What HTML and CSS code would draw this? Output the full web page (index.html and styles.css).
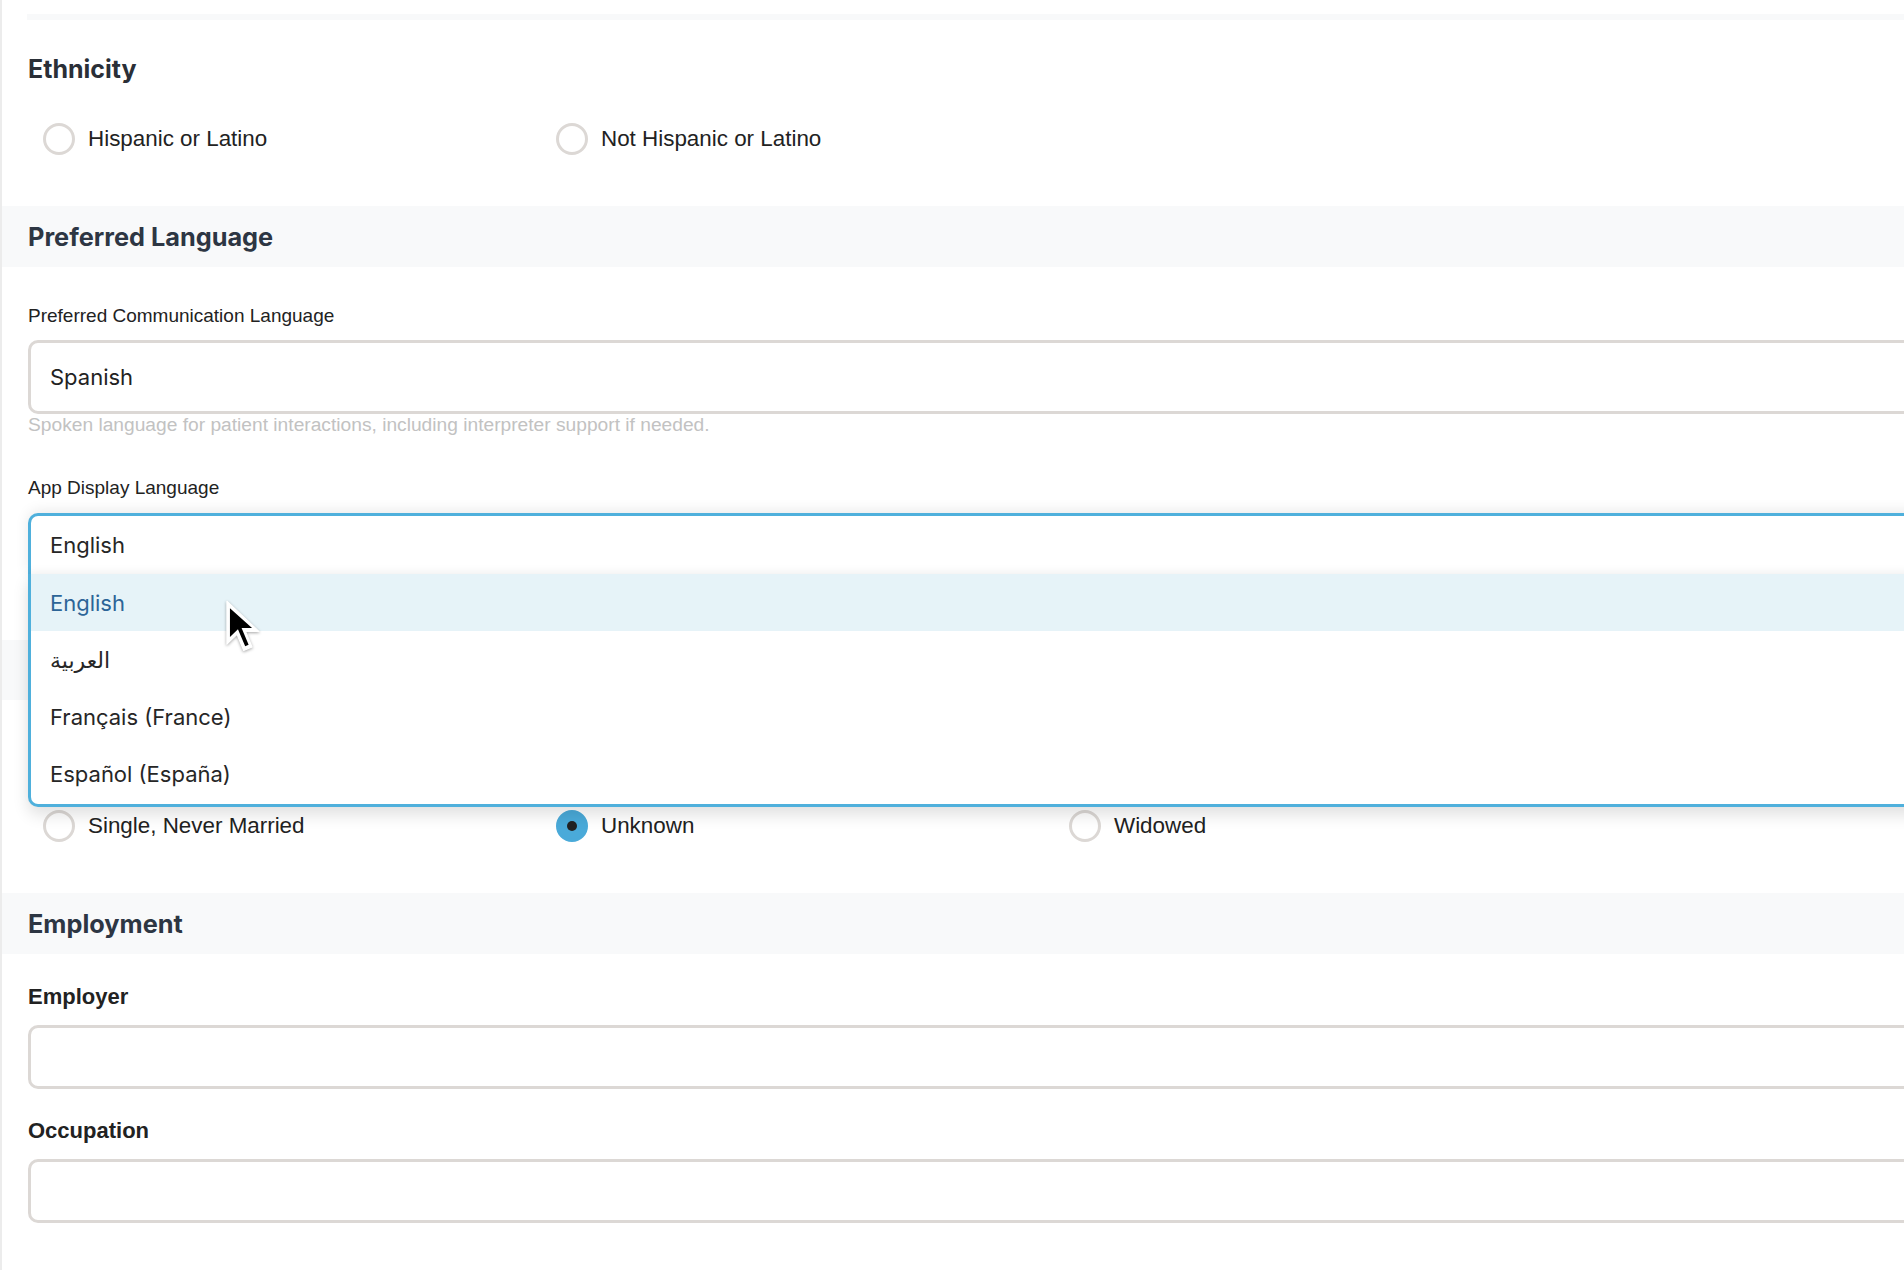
FILE: index.html
```html
<!DOCTYPE html>
<html lang="en">
<head>
<meta charset="utf-8">
<title>Patient Demographics</title>
<link rel="stylesheet" href="styles.css">
</head>
<body>
<div class="page">
  <div class="top-rule"></div>

  <section class="group">
    <h3 class="group-title">Ethnicity</h3>
    <div class="radios radios-ethnicity">
      <label class="radio"><span class="dot"></span><span class="radio-text">Hispanic or Latino</span></label>
      <label class="radio"><span class="dot"></span><span class="radio-text">Not Hispanic or Latino</span></label>
    </div>
  </section>

  <h2 class="band band-lang">Preferred Language</h2>

  <div class="field field-comm">
    <div class="label">Preferred Communication Language</div>
    <div class="input input-tall">Spanish</div>
    <div class="help">Spoken language for patient interactions, including interpreter support if needed.</div>
  </div>

  <div class="field field-app">
    <div class="label">App Display Language</div>
    <div class="select">
      <div class="select-control">English</div>
      <ul class="menu-list">
        <li class="opt opt-active">English</li>
        <li class="opt"><span dir="rtl">العربية</span></li>
        <li class="opt">Français (France)</li>
        <li class="opt">Español (España)</li>
      </ul>
    </div>
  </div>

  <div class="band band-marital" aria-label="Marital Status"></div>
  <div class="radios radios-marital">
    <label class="radio"><span class="dot"></span><span class="radio-text">Single, Never Married</span></label>
    <label class="radio"><span class="dot dot-on"></span><span class="radio-text">Unknown</span></label>
    <label class="radio"><span class="dot"></span><span class="radio-text">Widowed</span></label>
  </div>

  <h2 class="band band-emp">Employment</h2>

  <div class="field field-employer">
    <div class="label-bold">Employer</div>
    <div class="input input-short"></div>
  </div>
  <div class="field field-occupation">
    <div class="label-bold">Occupation</div>
    <div class="input input-short"></div>
  </div>

  <svg class="cursor" width="40" height="56" viewBox="0 0 21 29" aria-hidden="true">
    <path d="M1 1 L1 23.5 L6.3 18.3 L9.8 26.8 L14.2 25 L10.8 16.8 L17.8 16.8 Z" fill="#ffffff" stroke="#ffffff" stroke-width="0.6" stroke-linejoin="round"/>
    <path d="M2.6 4.6 L2.6 19.8 L6.8 15.7 L10.6 24.6 L12.4 23.8 L8.7 15 L14.2 15 Z" fill="#000000"/>
  </svg>
</div>
</body>
</html>
```

FILE: styles.css
```css
html, body {
  margin: 0;
  padding: 0;
  background: #ffffff;
  overflow: hidden;
}

body {
  font-family: "Liberation Sans", Arial, sans-serif;
  color: #222222;
}

.page {
  position: relative;
  width: 2300px;
  min-height: 1270px;
  padding-top: 14px;
  border-left: 2px solid #ececec;
}

.top-rule {
  height: 6px;
  margin-left: 25px;
  background: #f8f9fa;
}

.group {
  padding-left: 26px;
}

.group-title {
  margin: 34px 0 0;
  font-family: Inter, "Liberation Sans", sans-serif;
  font-weight: 700;
  font-size: 25px;
  line-height: 30px;
  color: #2a2f37;
}

.radios {
  display: grid;
  grid-template-columns: repeat(4, 513px);
  padding-left: 15px;
}

.radios-ethnicity {
  margin-top: 39px;
}

.radios-marital {
  margin-left: 26px;
  margin-top: 110px;
  grid-template-columns: repeat(3, 513px);
}

.radio {
  display: flex;
  align-items: center;
  gap: 13px;
  height: 32px;
}

.dot {
  box-sizing: border-box;
  width: 32px;
  height: 32px;
  border-radius: 50%;
  border: 3px solid #dcd8d5;
  background: #ffffff;
  flex: none;
  display: flex;
  align-items: center;
  justify-content: center;
}

.dot-on {
  background: #4aaad9;
  border-color: #4aaad9;
}

.dot-on::after {
  content: "";
  width: 10px;
  height: 10px;
  border-radius: 50%;
  background: #222222;
}

.radio-text {
  font-size: 22.4px;
  line-height: 26px;
  color: #222222;
}

.band {
  margin: 51px 0 0;
  height: 61px;
  padding-left: 26px;
  display: flex;
  align-items: center;
  background: #f8f9fa;
  font-family: Inter, "Liberation Sans", sans-serif;
  font-weight: 700;
  font-size: 25.3px;
  color: #2d3643;
}

.band-marital {
  margin-top: 66px;
  height: 60px;
}

.field {
  padding-left: 26px;
}

.field-comm {
  margin-top: 37px;
}

.field-app {
  margin-top: 41px;
}

.label {
  font-size: 19px;
  line-height: 24px;
  color: #222222;
}

.label-bold {
  font-size: 22px;
  line-height: 26px;
  font-weight: 700;
  color: #222222;
}

.input {
  box-sizing: border-box;
  margin-top: 12px;
  border: 3px solid #dcd8d5;
  border-radius: 10px;
  background: #ffffff;
  padding-left: 19px;
  display: flex;
  align-items: center;
  font-family: Inter, "Liberation Sans", sans-serif;
  font-size: 22px;
  color: #222222;
}

.input-tall {
  height: 74px;
}

.input-short {
  height: 64px;
  margin-top: 15px;
}

.help {
  margin-top: 1px;
  font-size: 19.2px;
  line-height: 20px;
  color: #c2c2c2;
}

.select {
  position: relative;
  margin-top: 13px;
  font-family: Inter, "DejaVu Sans", "Liberation Sans", sans-serif;
  font-size: 22px;
  color: #262626;
}

.select-control {
  box-sizing: border-box;
  height: 61px;
  padding-left: 19px;
  display: flex;
  align-items: center;
  border: 3px solid #4fb0dc;
  border-bottom: none;
  border-radius: 10px 10px 0 0;
  background: #ffffff;
  box-shadow: 0 -2px 14px rgba(0, 0, 0, 0.09);
}

.menu-list {
  position: absolute;
  top: 100%;
  left: 0;
  right: 0;
  z-index: 2;
  box-sizing: border-box;
  height: 233px;
  margin: 0;
  padding: 0 0 2px;
  list-style: none;
  border: 3px solid #4fb0dc;
  border-top: none;
  border-radius: 0 0 10px 10px;
  background: #ffffff;
  box-shadow: 0 8px 16px rgba(0, 0, 0, 0.12), 0 -4px 8px rgba(0, 0, 0, 0.03);
}

.opt {
  height: 57px;
  padding-left: 19px;
  display: flex;
  align-items: center;
}

.opt-active {
  background: #e6f3f8;
  color: #2c6497;
}

.band-emp {
  margin-top: 51px;
}

.field-employer {
  margin-top: 30px;
}

.field-occupation {
  margin-top: 29px;
}

.cursor {
  position: absolute;
  left: 223px;
  top: 599px;
  z-index: 5;
  filter: drop-shadow(0 1px 1.5px rgba(0, 0, 0, 0.35));
}
```
